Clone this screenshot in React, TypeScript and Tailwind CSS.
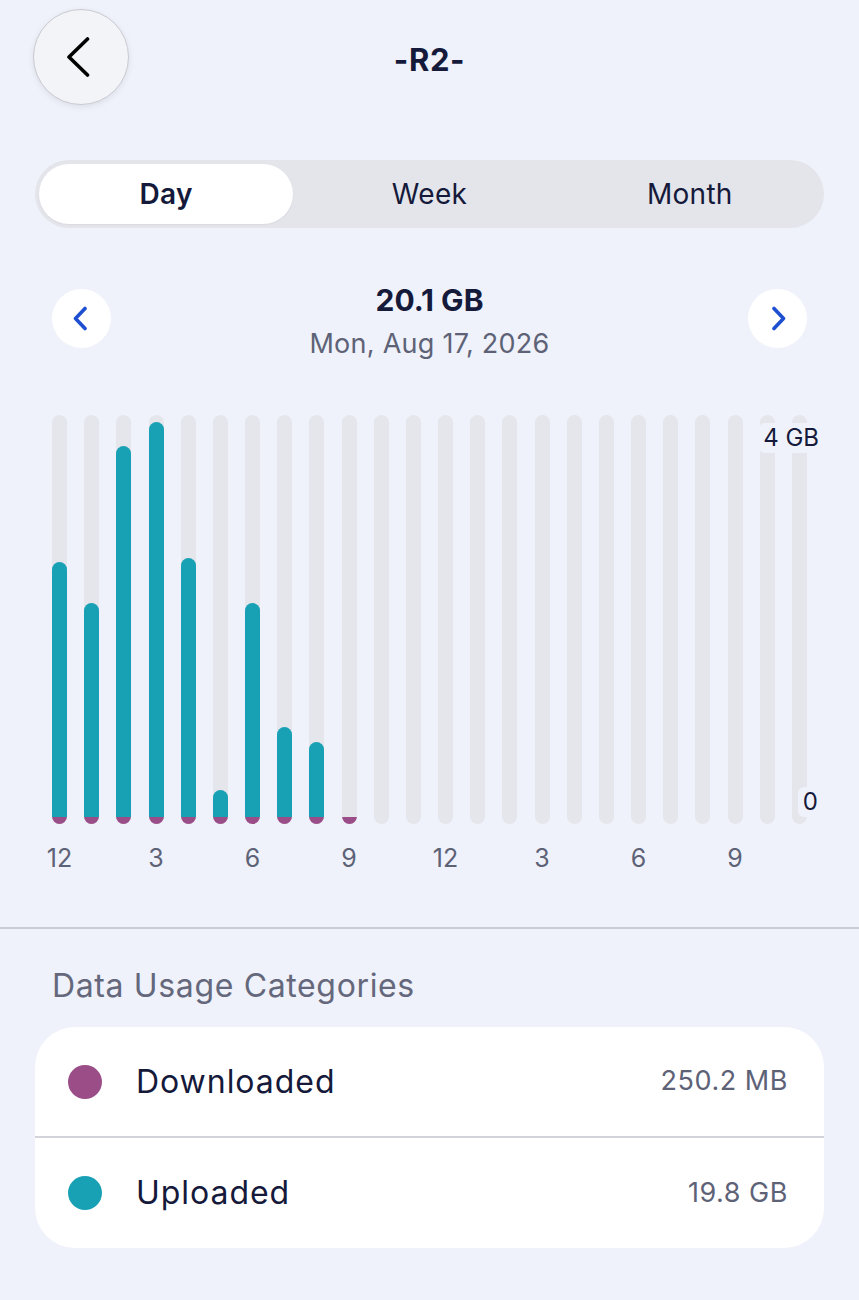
import React from 'react';

// fill height in px (teal + purple cap), 0 = empty hour
const hours = [262, 221, 378, 402, 266, 34, 221, 97, 82, 7, 0, 0, 0, 0, 0, 0, 0, 0, 0, 0, 0, 0, 0, 0];
const axisLabels: Record<number, string> = { 0: '12', 3: '3', 6: '6', 9: '9', 12: '12', 15: '3', 18: '6', 21: '9' };

function Chevron({ dir, className }: { dir: 'left' | 'right'; className?: string }) {
  return (
    <svg viewBox="0 0 16 25" className={className} fill="none">
      <polyline
        points={dir === 'left' ? '13,2.5 3.5,12.5 13,22.5' : '3,2.5 12.5,12.5 3,22.5'}
        stroke="currentColor"
        strokeWidth="3.6"
        strokeLinecap="round"
        strokeLinejoin="round"
      />
    </svg>
  );
}

function Bar({ h }: { h: number }) {
  return (
    <div className="flex flex-col items-center w-[15px]">
      <div className="h-[409px] w-[15px] rounded-full bg-[#e4e6ec] overflow-hidden flex flex-col justify-end">
        {h > 0 && (
          <div
            className={`flex flex-col w-full overflow-hidden ${h > 7 ? 'rounded-t-full' : ''}`}
            style={{ height: h }}
          >
            {h > 7 && <div className="flex-1 bg-[#18a0b5]" />}
            <div className="h-[7px] bg-[#9a4d87]" />
          </div>
        )}
      </div>
    </div>
  );
}

export default function App() {
  return (
    <div
      className="min-h-screen bg-[#eff2fa] text-[#15193a]"
      style={{ fontFamily: 'Inter, "Open Sans", sans-serif' }}
    >
      {/* header */}
      <div className="grid grid-cols-[96px_1fr_96px] items-center px-[33px] pt-[9px]">
        <button className="w-[96px] h-[96px] rounded-full bg-[#f3f4f8] border border-[#c9cad1] shadow-[0_2px_6px_rgba(0,0,0,0.08)] flex items-center justify-center">
          <svg viewBox="0 0 24 40" className="w-[24px] h-[40px] mr-[7px]" fill="none">
            <polyline points="21.5,2 3,20 21.5,38" stroke="#000" strokeWidth="3.6" strokeLinecap="round" strokeLinejoin="round" />
          </svg>
        </button>
        <h1 className="text-center text-[31px] font-bold leading-[36px] tracking-[0.02em] mt-[5px]">-R2-</h1>
        <div />
      </div>

      {/* period tabs */}
      <div className="mx-[35px] mt-[55px] h-[68px] rounded-full bg-[#e3e5eb] p-[4px] grid grid-cols-3">
        <div className="mr-[6px] rounded-full bg-white flex items-center justify-center text-[28px] font-semibold tracking-[0.01em] shadow-[0_1px_2px_rgba(0,0,0,0.05)]">
          Day
        </div>
        <div className="flex items-center justify-center text-[28px] tracking-[0.01em]">Week</div>
        <div className="flex items-center justify-center text-[28px] tracking-[0.01em]">Month</div>
      </div>

      {/* date navigation */}
      <div className="mt-[54px] px-[52px] flex items-start justify-between">
        <button className="mt-[7px] w-[59px] h-[59px] rounded-full bg-white flex items-center justify-center text-[#1f4fd1]">
          <Chevron dir="left" className="w-[16px] h-[25px] mr-[3px]" />
        </button>
        <div className="flex flex-col items-center">
          <div className="text-[30px] font-bold leading-[36px]">20.1 GB</div>
          <div className="mt-[10px] text-[27px] leading-[32px] text-[#5e6277] tracking-[0.01em]">Mon, Aug 17, 2026</div>
        </div>
        <button className="mt-[7px] w-[59px] h-[59px] rounded-full bg-white flex items-center justify-center text-[#1f4fd1]">
          <Chevron dir="right" className="w-[16px] h-[25px] ml-[3px]" />
        </button>
      </div>

      {/* chart */}
      <div className="mt-[55px] px-[52px]">
        <div className="relative flex justify-between">
          {hours.map((h, i) => (
            <Bar key={i} h={h} />
          ))}
          <span className="absolute right-[-16px] top-[8px] px-[4px] rounded-md bg-[#eff2fa] text-[24px] leading-[30px] text-[#15193a]">
            4 GB
          </span>
          <span className="absolute right-[-16px] top-[372px] px-[5px] rounded-md bg-[#eff2fa] text-[24px] leading-[30px] text-[#15193a]">
            0
          </span>
        </div>
        <div className="mt-[19px] flex justify-between">
          {hours.map((_, i) => (
            <div key={i} className="w-[15px] flex justify-center">
              <span className="whitespace-nowrap text-[25px] leading-[30px] text-[#5e6277]">{axisLabels[i] ?? ''}</span>
            </div>
          ))}
        </div>
      </div>

      <div className="mt-[54px] h-[2px] bg-[#c9ccd5]" />

      {/* categories */}
      <h2 className="mt-[39px] px-[52px] text-[32px] leading-[36px] text-[#65687c] tracking-[0.02em]">Data Usage Categories</h2>

      <div className="mt-[23px] mx-[35px] rounded-[40px] bg-white overflow-hidden">
        <div className="h-[109px] flex items-center pl-[33px] pr-[36px]">
          <span className="w-[34px] h-[34px] rounded-full bg-[#9a4d87]" />
          <span className="ml-[34px] flex-1 text-[32px] tracking-[0.03em]">Downloaded</span>
          <span className="text-[27px] text-[#5e6277] tracking-[0.02em]">250.2 MB</span>
        </div>
        <div className="h-[2px] bg-[#d3d4da]" />
        <div className="h-[110px] flex items-center pl-[33px] pr-[36px]">
          <span className="w-[34px] h-[34px] rounded-full bg-[#18a0b5]" />
          <span className="ml-[34px] flex-1 text-[32px] tracking-[0.03em]">Uploaded</span>
          <span className="text-[27px] text-[#5e6277] tracking-[0.02em]">19.8 GB</span>
        </div>
      </div>
    </div>
  );
}
